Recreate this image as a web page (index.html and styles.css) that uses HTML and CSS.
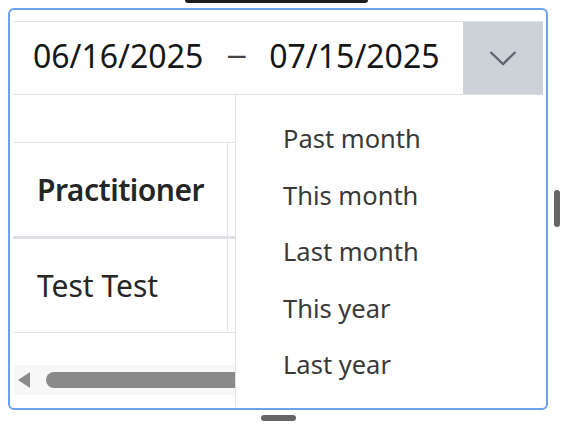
FILE: index.html
```html
<!DOCTYPE html>
<html lang="en">
<head>
    <meta charset="UTF-8">
    <meta name="viewport" content="width=device-width, initial-scale=1.0">
    <title>Date range</title>
    <link rel="stylesheet" href="styles.css">
</head>
<body>
    <div class="topbar"></div>

    <div class="frame">
        <div class="range">
            <span class="date">06/16/2025</span>
            <span class="sep">&mdash;</span>
            <span class="date">07/15/2025</span>
            <button class="toggle" type="button">
                <svg width="28" height="16" viewBox="0 0 28 16"><path d="M1.5 2 L14 14 L26.5 2" fill="none" stroke="#5f6670" stroke-width="2.4"/></svg>
            </button>
        </div>

        <div class="table-wrap">
            <div class="toolbar"></div>
            <table class="grid">
                <thead>
                    <tr><th>Practitioner</th><th></th></tr>
                </thead>
                <tbody>
                    <tr><td>Test Test</td><td></td></tr>
                </tbody>
            </table>
            <div class="hscroll">
                <span class="arrow"></span>
                <span class="thumb"></span>
            </div>
        </div>

        <ul class="menu">
            <li>Past month</li>
            <li>This month</li>
            <li>Last month</li>
            <li>This year</li>
            <li>Last year</li>
        </ul>
    </div>

    <div class="handle handle-right"></div>
    <div class="handle handle-bottom"></div>
</body>
</html>
```

FILE: styles.css
```css
body {
    margin: 0;
    padding: 0;
    background-color: #fff;
    font-family: 'Noto Sans', 'Liberation Sans', sans-serif;
    color: #393939;
}
.topbar {
    margin-left: 185px;
    width: 183px;
    height: 3px;
    background-color: #1b1d21;
    border-radius: 0 0 4px 4px;
}
.frame {
    position: relative;
    box-sizing: border-box;
    margin: 5px 0 0 8px;
    width: 540px;
    height: 402px;
    border: 2px solid #6aa1f5;
    border-radius: 6px;
    padding: 11px 3px 0 3px;
    overflow: hidden;
}
.range {
    display: flex;
    align-items: center;
    height: 74px;
    box-sizing: border-box;
    border-top: 1px solid #dde0e4;
    border-bottom: 1px solid #dde0e4;
    padding-left: 20px;
    font-size: 32px;
    line-height: 1;
    color: #161616;
}
.date {
    position: relative;
    top: -2px;
}
.sep {
    position: relative;
    top: -3px;
    margin: 0 23px 0 24px;
    font-size: 19px;
    font-weight: 700;
    color: #444;
}
.toggle {
    margin-left: auto;
    width: 80px;
    height: 100%;
    border: 0;
    padding: 0;
    background-color: #cdd2d9;
    display: flex;
    align-items: center;
    justify-content: center;
}
.table-wrap {
    overflow: hidden;
}
.toolbar {
    height: 47px;
}
.grid {
    border-collapse: collapse;
    width: 100%;
    border-top: 1px solid #e0e2e5;
    font-size: 30px;
    color: #262626;
}
.grid th, .grid td {
    text-align: left;
    padding: 0 0 0 24px;
}
.grid th:first-child, .grid td:first-child {
    width: 190px;
    border-right: 1px solid #e2e4e7;
}
.grid th {
    height: 93px;
    font-weight: 600;
    letter-spacing: -0.5px;
    border-bottom: 3px solid #dcdfe3;
}
.grid td {
    height: 93px;
    border-bottom: 1px solid #e2e4e7;
}
.hscroll {
    margin-top: 32px;
    height: 30px;
    background-color: #f7f7f7;
    display: flex;
    align-items: center;
    padding-left: 5px;
}
.arrow {
    width: 0;
    height: 0;
    border-top: 8px solid transparent;
    border-bottom: 8px solid transparent;
    border-right: 12px solid #8a8a8a;
}
.thumb {
    margin-left: 16px;
    flex: 1;
    height: 16px;
    border-radius: 8px;
    background-color: #8a8a8a;
}
.menu {
    position: absolute;
    top: 85px;
    left: 225px;
    right: 1px;
    bottom: 1px;
    margin: 0;
    padding: 15px 0 0 47px;
    list-style: none;
    background-color: #fff;
    border-left: 1px solid #e0e2e5;
    font-size: 25.5px;
    color: #393939;
}
.menu li {
    height: 56.5px;
    line-height: 56.5px;
}
.handle {
    position: absolute;
    background-color: #666;
    border-radius: 3px;
}
.handle-right {
    left: 554px;
    top: 190px;
    width: 6px;
    height: 37px;
}
.handle-bottom {
    left: 261px;
    top: 415px;
    width: 35px;
    height: 6px;
}
```
